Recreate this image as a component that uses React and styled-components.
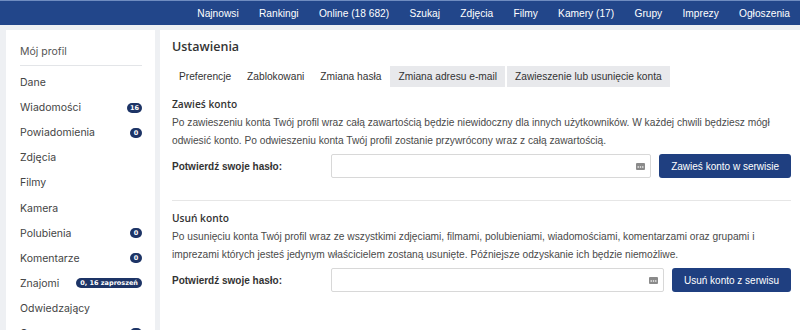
import React from 'react';
import styled, { createGlobalStyle } from 'styled-components';

const GlobalStyle = createGlobalStyle`
  html, body {
    margin: 0;
    padding: 0;
    background: #eef0f3;
    font-family: "Liberation Sans", Arial, sans-serif;
    overflow: hidden;
  }
  * { box-sizing: border-box; }
`;

const navItems = ['Najnowsi', 'Rankingi', 'Online (18 682)', 'Szukaj', 'Zdjęcia', 'Filmy', 'Kamery (17)', 'Grupy', 'Imprezy', 'Ogłoszenia'];

const menu = [
  { name: 'Dane' },
  { name: 'Wiadomości', badge: '16' },
  { name: 'Powiadomienia', badge: '0' },
  { name: 'Zdjęcia' },
  { name: 'Filmy' },
  { name: 'Kamera' },
  { name: 'Polubienia', badge: '0' },
  { name: 'Komentarze', badge: '0' },
  { name: 'Znajomi', badge: '0, 16 zaproszeń' },
  { name: 'Odwiedzający' },
  { name: 'Grupy', badge: '0' },
];

const tabs = [
  { name: 'Preferencje' },
  { name: 'Zablokowani' },
  { name: 'Zmiana hasła' },
  { name: 'Zmiana adresu e-mail', shaded: true },
  { name: 'Zawieszenie lub usunięcie konta', shaded: true },
];

const KeyIcon = () => (
  <svg width="9" height="7" viewBox="0 0 9 7">
    <rect x="0" y="0" width="9" height="7" rx="1" fill="#8a8a8a" />
    <circle cx="2.2" cy="4" r="0.8" fill="#fff" />
    <circle cx="4.5" cy="4" r="0.8" fill="#fff" />
    <circle cx="6.8" cy="4" r="0.8" fill="#fff" />
  </svg>
);

const App = () => {
  return (
    <>
      <GlobalStyle />
      <TopBar>
        {navItems.map(item => <NavLink key={item}>{item}</NavLink>)}
      </TopBar>
      <Page>
        <Sidebar>
          <SideTitle>Mój profil</SideTitle>
          <SideList>
            {menu.map(m => (
              <SideItem key={m.name}>
                <span>{m.name}</span>
                {m.badge && <Badge $wide={m.badge.length > 2}>{m.badge}</Badge>}
              </SideItem>
            ))}
          </SideList>
        </Sidebar>
        <Main>
          <Title>Ustawienia</Title>
          <Tabs>
            {tabs.map(t => <Tab key={t.name} $shaded={t.shaded}>{t.name}</Tab>)}
          </Tabs>

          <Section>
            <SectionTitle>Zawieś konto</SectionTitle>
            <Text>
              Po zawieszeniu konta Twój profil wraz całą zawartością będzie niewidoczny dla innych użytkowników. W każdej chwili będziesz mógł<br />
              odwiesić konto. Po odwieszeniu konta Twój profil zostanie przywrócony wraz z całą zawartością.
            </Text>
            <FormRow>
              <Label>Potwierdź swoje hasło:</Label>
              <InputBox>
                <KeyIcon />
              </InputBox>
              <Button>Zawieś konto w serwisie</Button>
            </FormRow>
          </Section>

          <Divider />

          <Section>
            <SectionTitle>Usuń konto</SectionTitle>
            <Text>
              Po usunięciu konta Twój profil wraz ze wszystkimi zdjęciami, filmami, polubieniami, wiadomościami, komentarzami oraz grupami i<br />
              imprezami których jesteś jedynym właścicielem zostaną usunięte. Późniejsze odzyskanie ich będzie niemożliwe.
            </Text>
            <FormRow>
              <Label>Potwierdź swoje hasło:</Label>
              <InputBox>
                <KeyIcon />
              </InputBox>
              <Button>Usuń konto z serwisu</Button>
            </FormRow>
          </Section>
        </Main>
      </Page>
    </>
  );
};

const TopBar = styled.div`
  height: 25px;
  background: #22468a;
  border-top: 1px solid #6f8cc0;
  display: flex;
  justify-content: flex-end;
  align-items: center;
  padding-right: 10px;
  gap: 20.3px;
`;

const NavLink = styled.a`
  color: #fff;
  font-size: 10.2px;
  cursor: pointer;
`;

const Page = styled.div`
  display: flex;
  gap: 5px;
  padding: 5px 0 0 6px;
  align-items: flex-start;
`;

const Sidebar = styled.div`
  width: 149px;
  height: 320px;
  background: #fff;
  padding: 0 13px 0 14px;
  font-family: Inter, "Liberation Sans", sans-serif;
`;

const SideTitle = styled.div`
  font-size: 10.5px;
  color: #555;
  padding: 15px 0 0 0;
  height: 36px;
  border-bottom: 1px solid #e3e5e8;
`;

const SideList = styled.div`
  padding-top: 4px;
`;

const SideItem = styled.div`
  display: flex;
  justify-content: space-between;
  align-items: center;
  height: 25.1px;
  font-size: 10.5px;
  color: #444;
`;

const Badge = styled.span`
  background: #1d3466;
  color: #fff;
  font-family: "DejaVu Sans", sans-serif;
  font-weight: bold;
  font-size: 6.5px;
  line-height: 10px;
  height: 10px;
  min-width: 12px;
  padding: 0 ${p => (p.$wide ? '4px' : '3px')};
  border-radius: 5px;
  text-align: center;
`;

const Main = styled.div`
  flex: 1;
  height: 330px;
  background: #fff;
  padding: 7px 9px 0 12px;
  color: #444;
`;

const Title = styled.h1`
  margin: 0;
  font-family: "Open Sans", sans-serif;
  font-weight: 600;
  font-size: 12.5px;
  line-height: 20px;
  color: #333;
`;

const Tabs = styled.div`
  display: flex;
  gap: 2px;
  margin-top: 9px;
`;

const Tab = styled.div`
  height: 21px;
  line-height: 21px;
  padding: 0 ${p => (p.$shaded ? '8px' : '7px')};
  font-size: 10.2px;
  color: #333;
  background: ${p => (p.$shaded ? '#e8e9ec' : 'transparent')};
`;

const Section = styled.div`
  padding-top: 9px;
`;

const SectionTitle = styled.h3`
  margin: 0;
  font-family: "Open Sans", sans-serif;
  font-weight: 600;
  font-size: 10.2px;
  line-height: 16px;
  color: #333;
`;

const Text = styled.p`
  margin: 2px 0 0 0;
  font-size: 10.2px;
  line-height: 17.5px;
  color: #4a4a4a;
`;

const FormRow = styled.div`
  display: flex;
  align-items: center;
  gap: 8px;
  margin-top: 5px;
`;

const Label = styled.label`
  width: 151px;
  font-weight: bold;
  font-size: 10px;
  color: #333;
`;

const InputBox = styled.div`
  flex: 1;
  height: 24px;
  border: 1px solid #d8d8d8;
  border-radius: 2px;
  display: flex;
  align-items: center;
  justify-content: flex-end;
  padding-right: 5px;
`;

const Button = styled.button`
  height: 24px;
  background: #1f3f80;
  color: #fff;
  border: none;
  border-radius: 3px;
  padding: 0 12px;
  font-family: "Liberation Sans", Arial, sans-serif;
  font-size: 10px;
  cursor: pointer;
`;

const Divider = styled.div`
  height: 1px;
  background: #e6e6e6;
  margin-top: 22px;
`;

export default App;
